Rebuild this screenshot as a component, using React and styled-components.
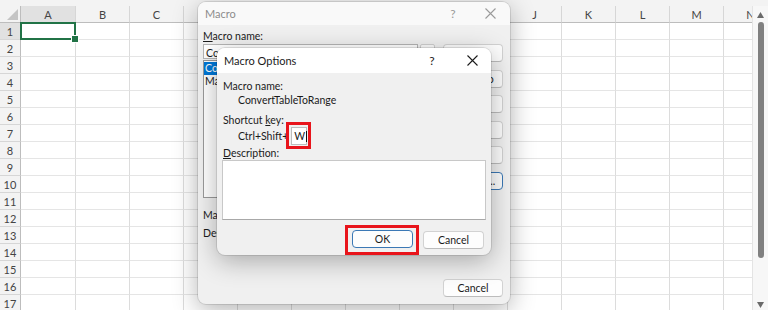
import React from 'react';
import styled, { createGlobalStyle, css } from 'styled-components';

const GlobalStyle = createGlobalStyle`
  html, body { margin: 0; padding: 0; background: #fff; }
  body { font-family: Lato, "Noto Sans", sans-serif; overflow: hidden; }
  * { box-sizing: border-box; }
`;

const Screen = styled.div`
  position: relative;
  width: 768px;
  height: 310px;
  overflow: hidden;
  background: #fff;
  display: flex;
  flex-direction: column;
`;

const TopBand = styled.div`
  flex: none;
  height: 6px;
  background: #f3f3f3;
`;

const Main = styled.div`
  flex: 1;
  display: flex;
  min-height: 0;
`;

const Grid = styled.div`
  flex: none;
  width: 752px;
  overflow: hidden;
  display: grid;
  grid-template-columns: 21px 55px repeat(13, 54px);
  grid-auto-rows: 17px;
  align-content: start;
  font-family: Lato, "Noto Sans", sans-serif;
  font-size: 11px;
  color: #444;
`;

const Corner = styled.div`
  background: #f3f3f3;
  border-right: 1px solid #bdbdbd;
  border-bottom: 1px solid #bdbdbd;
  display: flex;
  align-items: flex-end;
  justify-content: flex-end;
  padding: 0 2px 2px 0;
`;

const ColHead = styled.div`
  background: ${p => (p.$sel ? '#e1e1e1' : '#f3f3f3')};
  border-right: 1px solid #d6d6d6;
  border-bottom: 1px solid #bdbdbd;
  display: flex;
  align-items: center;
  justify-content: center;
  padding-top: 1px;
`;

const RowHead = styled.div`
  background: ${p => (p.$sel ? '#e1e1e1' : '#f3f3f3')};
  border-right: 1px solid #bdbdbd;
  border-bottom: 1px solid #d6d6d6;
  display: flex;
  align-items: center;
  justify-content: center;
`;

const Cell = styled.div`
  position: relative;
  border-right: 1px solid #dcdcdc;
  border-bottom: 1px solid #e5e5e5;
  ${p =>
    p.$active &&
    css`
      z-index: 2;
      &::after {
        content: '';
        position: absolute;
        left: -1px;
        top: -1px;
        right: -1px;
        bottom: -1px;
        border: 2px solid #217346;
      }
      &::before {
        content: '';
        position: absolute;
        right: -4px;
        bottom: -4px;
        width: 6px;
        height: 6px;
        background: #217346;
        border: 1px solid #fff;
        z-index: 3;
      }
    `}
`;

const Scrollbar = styled.div`
  flex: 1;
  background: #f7f7f7;
  border-left: 1px solid #e4e4e4;
  display: flex;
  flex-direction: column;
  align-items: center;
  padding: 6px 0 2px;
`;

const Thumb = styled.div`
  width: 6px;
  height: 236px;
  margin-top: 4px;
  border-radius: 3px;
  background: #808080;
`;

const Spacer = styled.div`
  flex: 1;
`;

/* ---------- dialogs ---------- */

const Window = styled.div`
  position: absolute;
  left: ${p => p.$x}px;
  top: ${p => p.$y}px;
  width: ${p => p.$w}px;
  height: ${p => p.$h}px;
  background: #f0f0f0;
  border-radius: 8px;
  overflow: hidden;
  display: flex;
  flex-direction: column;
  box-shadow: 0 0 0 1px rgba(0, 0, 0, 0.1), 0 6px 26px rgba(0, 0, 0, 0.3);
  font-family: Lato, "Noto Sans", sans-serif;
  color: #1b1b1b;
`;

const TitleBar = styled.div`
  flex: none;
  height: ${p => p.$h}px;
  background: ${p => (p.$active ? '#ffffff' : '#f9f9f9')};
  display: flex;
  align-items: center;
  padding: 0 ${p => p.$pr}px 0 7px;
  font-size: 11px;
  color: ${p => (p.$active ? '#1b1b1b' : '#8c8c8c')};
`;

const TitleText = styled.div`
  flex: 1;
`;

const TitleControls = styled.div`
  display: flex;
  gap: ${p => p.$gap}px;
`;

const TitleButton = styled.div`
  width: 26px;
  height: 20px;
  display: flex;
  align-items: center;
  justify-content: center;
  font-size: 12px;
  color: ${p => (p.$active ? '#1b1b1b' : '#9a9a9a')};
`;

const MacroBody = styled.div`
  flex: 1;
  display: flex;
  gap: 8px;
  padding: 5px 7px 0 5px;
  font-size: 10.5px;
`;

const LeftCol = styled.div`
  width: 232px;
  display: flex;
  flex-direction: column;
`;

const RightCol = styled.div`
  flex: 1;
  display: flex;
  flex-direction: column;
  gap: 7.6px;
  padding: 14px 0 7px;
`;

const Label = styled.div`
  line-height: ${p => p.$lh || 13}px;
  padding-left: ${p => p.$indent || 0}px;
  margin-top: ${p => p.$mt || 0}px;
  white-space: nowrap;
`;

const NameRow = styled.div`
  display: flex;
  gap: 2px;
  height: 15px;
  margin-top: 1px;
`;

const NameInput = styled.div`
  flex: 1;
  background: #fff;
  border: 1px solid #b5b5b5;
  line-height: 14px;
  padding: 1px 0 0 2px;
  overflow: hidden;
  white-space: nowrap;
`;

const ArrowBtn = styled.div`
  width: 15px;
  background: #fbfbfb;
  border: 1px solid #cfcfcf;
  border-radius: 2px;
`;

const ListBox = styled.div`
  height: 138px;
  margin-top: 1px;
  background: #fff;
  border: 1px solid #9a9a9a;
  padding-top: 1px;
  overflow: hidden;
`;

const ListItem = styled.div`
  line-height: 12px;
  height: 13px;
  padding-left: 1px;
  white-space: nowrap;
  background: ${p => (p.$sel ? '#0078d7' : 'transparent')};
  color: ${p => (p.$sel ? '#fff' : '#1b1b1b')};
`;

const DlgButton = styled.div`
  flex: none;
  height: 18px;
  display: flex;
  align-items: center;
  justify-content: center;
  background: #fdfdfd;
  border: 1px solid ${p => (p.$focus ? '#3b78b5' : '#d2d2d2')};
  border-bottom-color: ${p => (p.$focus ? '#3b78b5' : '#bcbcbc')};
  border-radius: 4px;
  font-size: 10.5px;
  color: #1b1b1b;
  white-space: nowrap;
  ${p => p.$w && css`width: ${p.$w}px;`}
  ${p => p.$push && css`margin-top: auto;`}
`;

const OptionsBody = styled.div`
  flex: 1;
  display: flex;
  flex-direction: column;
  padding: 7px 5px 0 5px;
  font-size: 10.5px;
`;

const ShortcutRow = styled.div`
  display: flex;
  align-items: center;
  margin-top: -4px;
  padding-left: 16px;
`;

const Highlight = styled.div`
  border: 3px solid #e8141b;
  padding: ${p => p.$pad};
  margin-left: ${p => p.$ml || 0}px;
  display: flex;
`;

const KeyInput = styled.div`
  width: 16px;
  height: 18px;
  background: #fff;
  border: 1px solid #bdbdbd;
  display: flex;
  align-items: center;
  padding-left: 2px;
  font-size: 10.5px;
`;

const Caret = styled.span`
  display: inline-block;
  width: 1px;
  height: 11px;
  background: #111;
  margin-left: 0.5px;
`;

const TextArea = styled.div`
  height: 60px;
  margin-top: 1px;
  background: #fff;
  border: 1px solid #c8c8c8;
  border-bottom-color: #a8a8a8;
`;

const ButtonRow = styled.div`
  display: flex;
  justify-content: flex-end;
  align-items: center;
  gap: 4px;
  margin-top: 5px;
  padding-right: 2px;
`;

const CloseIcon = ({ color }) => (
  <svg width="11" height="11" viewBox="0 0 11 11">
    <path d="M0.5 0.5 L10.5 10.5 M10.5 0.5 L0.5 10.5" stroke={color} strokeWidth="1.1" fill="none" />
  </svg>
);

const cols = ['A', 'B', 'C', 'D', 'E', 'F', 'G', 'H', 'I', 'J', 'K', 'L', 'M', 'N'];
const rows = Array.from({ length: 17 }, (_, i) => i + 1);

export default function App() {
  return (
    <>
      <GlobalStyle />
      <Screen>
        <TopBand />
        <Main>
          <Grid>
            <Corner>
              <svg width="11" height="11" viewBox="0 0 11 11">
                <polygon points="11,0 11,11 0,11" fill="#c4c4c4" />
              </svg>
            </Corner>
            {cols.map(c => (
              <ColHead key={c} $sel={c === 'A'}>{c}</ColHead>
            ))}
            {rows.map(r => (
              <React.Fragment key={r}>
                <RowHead $sel={r === 1}>{r}</RowHead>
                {cols.map(c => (
                  <Cell key={c} $active={r === 1 && c === 'A'} />
                ))}
              </React.Fragment>
            ))}
          </Grid>
          <Scrollbar>
            <svg width="7" height="6" viewBox="0 0 7 6">
              <polygon points="3.5,0 7,6 0,6" fill="#6a6a6a" />
            </svg>
            <Thumb />
            <Spacer />
            <svg width="7" height="6" viewBox="0 0 7 6">
              <polygon points="0,0 7,0 3.5,6" fill="#6a6a6a" />
            </svg>
          </Scrollbar>
        </Main>

        <Window $x={198} $y={2} $w={312} $h={302}>
          <TitleBar $h={23} $pr={7}>
            <TitleText>Macro</TitleText>
            <TitleControls $gap={11}>
              <TitleButton>?</TitleButton>
              <TitleButton><CloseIcon color="#9a9a9a" /></TitleButton>
            </TitleControls>
          </TitleBar>
          <MacroBody>
            <LeftCol>
              <Label><u>M</u>acro name:</Label>
              <NameRow>
                <NameInput>ConvertTableToRange</NameInput>
                <ArrowBtn />
              </NameRow>
              <ListBox>
                <ListItem $sel>ConvertTableToRange</ListItem>
                <ListItem>MacroSample</ListItem>
              </ListBox>
              <Label $mt={11}>Macros in:</Label>
              <Label $mt={5}>Description</Label>
            </LeftCol>
            <RightCol>
              <DlgButton>Run</DlgButton>
              <DlgButton>Step Into</DlgButton>
              <DlgButton>Edit</DlgButton>
              <DlgButton>Create</DlgButton>
              <DlgButton>Delete</DlgButton>
              <DlgButton $focus>Options...</DlgButton>
              <DlgButton $push>Cancel</DlgButton>
            </RightCol>
          </MacroBody>
        </Window>

        <Window $x={217} $y={48} $w={274} $h={207}>
          <TitleBar $h={25} $pr={6} $active>
            <TitleText>Macro Options</TitleText>
            <TitleControls $gap={14}>
              <TitleButton $active>?</TitleButton>
              <TitleButton $active><CloseIcon color="#1b1b1b" /></TitleButton>
            </TitleControls>
          </TitleBar>
          <OptionsBody>
            <Label $lh={12} $indent={1}>Macro name:</Label>
            <Label $lh={12} $indent={16} $mt={2}>ConvertTableToRange</Label>
            <Label $lh={12} $indent={1} $mt={8}>Shortcut <u>k</u>ey:</Label>
            <ShortcutRow>
              <span>Ctrl+Shift+</span>
              <Highlight $pad="2px 1px 1px 2px" $ml={-2}>
                <KeyInput>W<Caret /></KeyInput>
              </Highlight>
            </ShortcutRow>
            <Label $lh={12} $indent={1} $mt={-2}><u>D</u>escription:</Label>
            <TextArea />
            <ButtonRow>
              <Highlight $pad="2px 3px 4px 4px">
                <DlgButton $focus $w={61}>OK</DlgButton>
              </Highlight>
              <DlgButton $w={61}>Cancel</DlgButton>
            </ButtonRow>
          </OptionsBody>
        </Window>
      </Screen>
    </>
  );
}
